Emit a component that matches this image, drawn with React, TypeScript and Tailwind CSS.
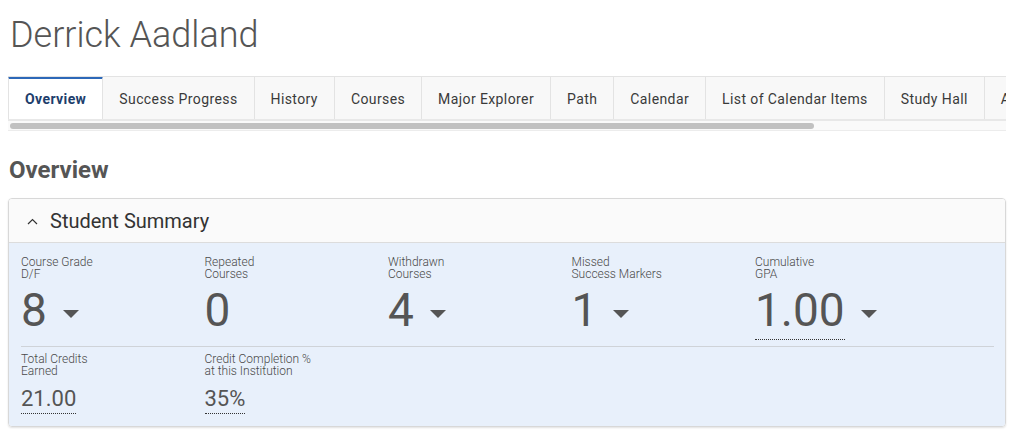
import React from "react"

const tabs = [
  "Overview",
  "Success Progress",
  "History",
  "Courses",
  "Major Explorer",
  "Path",
  "Calendar",
  "List of Calendar Items",
  "Study Hall",
  "Alerts",
]

function Caret() {
  return (
    <svg width="16" height="8" viewBox="0 0 16 8" className="ml-[16px] shrink-0">
      <polygon points="0,0 16,0 8,8" fill="#555555" />
    </svg>
  )
}

function Stat({
  label,
  value,
  caret,
  underline,
}: {
  label: [string, string]
  value: string
  caret?: boolean
  underline?: boolean
}) {
  return (
    <div>
      <p className="text-[12px] leading-[12px] font-light text-[#4a4a4a]">
        {label[0]}
        <br />
        {label[1]}
      </p>
      <div className="mt-[7px] flex items-center">
        <span
          className={`text-[46px] leading-[46px] pb-[6px] text-[#555555] border-b ${
            underline ? "border-dotted border-[#333]" : "border-transparent"
          }`}
        >
          {value}
        </span>
        {caret && <Caret />}
      </div>
    </div>
  )
}

function SmallStat({ label, value }: { label: [string, string]; value: string }) {
  return (
    <div>
      <p className="text-[12px] leading-[12px] font-light text-[#4a4a4a]">
        {label[0]}
        <br />
        {label[1]}
      </p>
      <span className="mt-[11px] inline-block text-[22px] leading-[22px] pb-[3px] text-[#555555] border-b border-dotted border-[#333]">
        {value}
      </span>
    </div>
  )
}

export default function App() {
  return (
    <div className="w-[1022px] h-[438px] overflow-hidden bg-white font-['Roboto',sans-serif]">
      <h1 className="pt-[13px] pl-[10px] text-[36px] leading-[44px] font-light text-[#555555]">
        Derrick Aadland
      </h1>

      {/* Tabs, scrolled strip: the last one runs past the edge */}
      <div className="mt-[19px] ml-2 w-[998px]">
        <div className="flex h-[43px] overflow-hidden border-t border-[#e3e3e3] bg-[#f8f8f8]">
          {tabs.map((t, i) =>
            i === 0 ? (
              <div
                key={t}
                className="flex shrink-0 items-center px-4 border-t-[3px] -mt-px border-t-[#2d68b8] border-l border-r border-l-[#e3e3e3] border-r-[#e3e3e3] bg-white text-[14px] tracking-[0.4px] font-bold text-[#1d3e6c]"
              >
                {t}
              </div>
            ) : (
              <div
                key={t}
                className="flex shrink-0 items-center pt-[2px] px-4 border-r border-[#e3e3e3] text-[14px] tracking-[0.4px] text-[#3a3a3a]"
              >
                {t}
              </div>
            )
          )}
        </div>
        <div className="border-t-2 border-[#e8e8e8] border-b border-b-[#ececec] bg-[#fafafa] h-[12px] pt-[2px] pl-[2px]">
          <div className="h-[6px] w-[804px] rounded-full bg-[#c1c1c1]" />
        </div>
      </div>

      <h2 className="mt-[25px] pl-[9px] text-[24px] leading-[28px] font-bold text-[#555555]">
        Overview
      </h2>

      {/* Card */}
      <div className="mt-[14px] ml-2 w-[998px] rounded-[4px] border border-[#d8d8d8] shadow-[0_1px_2px_rgba(0,0,0,0.12)] overflow-hidden">
        <div className="flex h-[44px] items-center pt-px border-b border-[#dcdcdc] bg-[#fafafa] pl-[18px]">
          <svg width="11" height="7" viewBox="0 0 11 7" className="mr-[12px]">
            <polyline points="1,6 5.5,1.5 10,6" fill="none" stroke="#333" strokeWidth="1.2" />
          </svg>
          <span className="text-[20px] leading-[24px] text-[#333333]">Student Summary</span>
        </div>
        <div className="bg-[#e8f0fb] pt-[13px] pb-[12px] pl-[12px] pr-[11px]">
          <div className="grid grid-cols-[repeat(5,183.5px)]">
            <Stat label={["Course Grade", "D/F"]} value="8" caret />
            <Stat label={["Repeated", "Courses"]} value="0" />
            <Stat label={["Withdrawn", "Courses"]} value="4" caret />
            <Stat label={["Missed", "Success Markers"]} value="1" caret />
            <Stat label={["Cumulative", "GPA"]} value="1.00" caret underline />
          </div>
          <div className="mt-[6px] border-t border-[#cfd3d8]" />
          <div className="mt-[6px] grid grid-cols-[repeat(5,183.5px)]">
            <SmallStat label={["Total Credits", "Earned"]} value="21.00" />
            <SmallStat label={["Credit Completion %", "at this Institution"]} value="35%" />
          </div>
        </div>
      </div>
    </div>
  )
}
